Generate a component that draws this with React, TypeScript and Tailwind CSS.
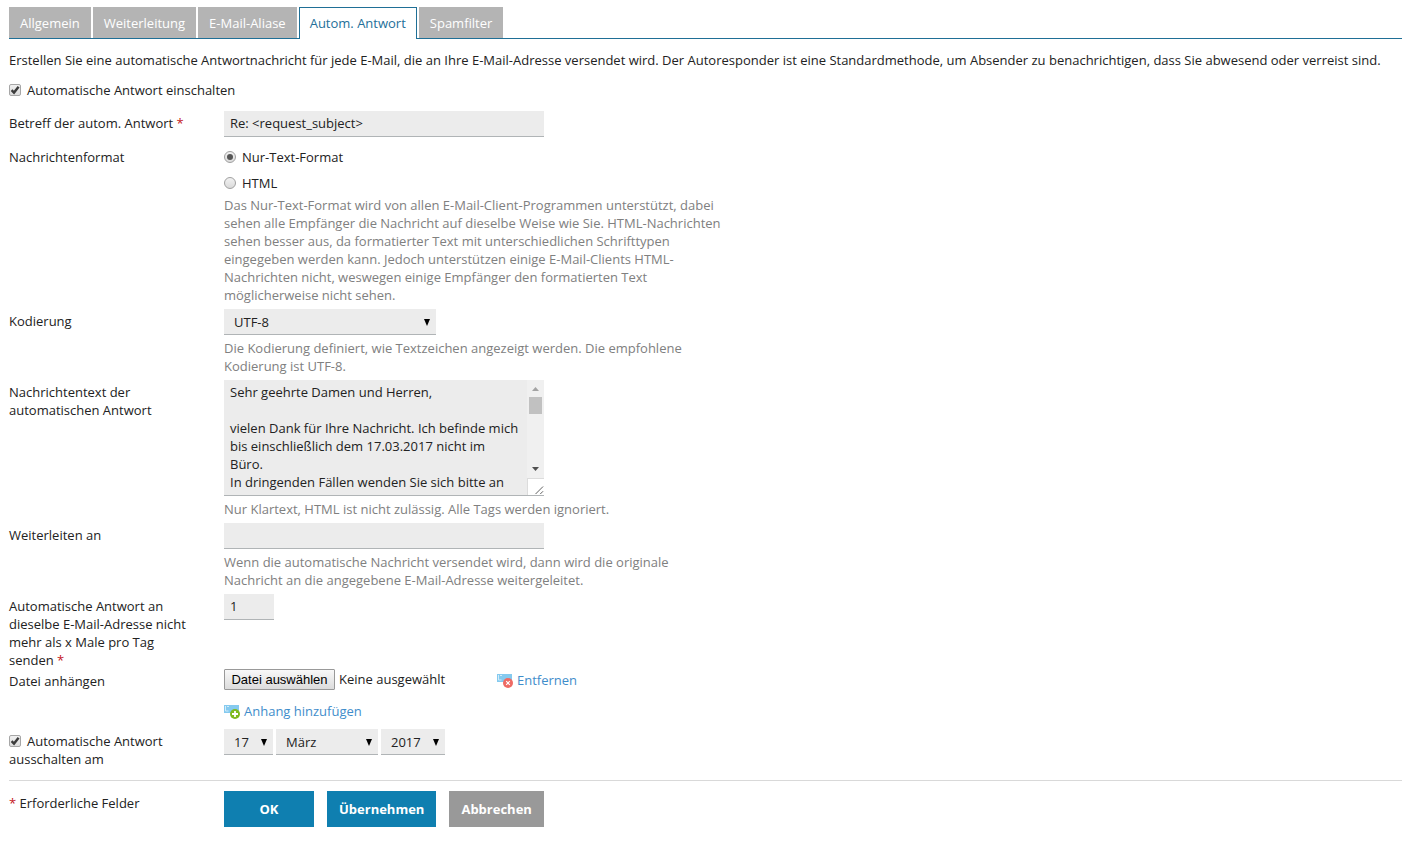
import { useRef, useState, type ReactNode } from "react";

const TABS = ["Allgemein", "Weiterleitung", "E-Mail-Aliase", "Autom. Antwort", "Spamfilter"];

const MESSAGE = `Sehr geehrte Damen und Herren,

vielen Dank für Ihre Nachricht. Ich befinde mich bis einschließlich dem 17.03.2017 nicht im Büro.
In dringenden Fällen wenden Sie sich bitte an`;

const FIELD = "block h-[26px] border-b border-[#b0b4b6] bg-[#ececec] px-1.5 pb-px outline-none focus:border-[#0f7fb0]";

function Required() {
  return <span className="text-[#c4161c]">*</span>;
}

function Row({ label, htmlFor, className = "mb-[5px]", children }: { label: ReactNode; htmlFor?: string; className?: string; children: ReactNode }) {
  return (
    <div className={`grid grid-cols-[215px_1fr] ${className}`}>
      <div className="w-[185px] pt-[3px]">{htmlFor ? <label htmlFor={htmlFor}>{label}</label> : label}</div>
      <div>{children}</div>
    </div>
  );
}

function Hint({ children }: { children: ReactNode }) {
  return <p className="mt-1 max-w-[500px] text-[#808080]">{children}</p>;
}

function Tick({ id, checked, onChange }: { id: string; checked: boolean; onChange: (v: boolean) => void }) {
  return (
    <span className="relative mr-1.5 inline-block size-3 align-[-1px]">
      <input
        id={id}
        type="checkbox"
        checked={checked}
        onChange={(e) => onChange(e.target.checked)}
        className="block size-3 appearance-none rounded-[2px] border border-[#a6a6a6] bg-linear-to-b from-[#f0f0f0] to-[#dcdcdc]"
      />
      {checked && (
        <svg viewBox="0 0 12 12" className="pointer-events-none absolute inset-0 size-3" aria-hidden="true">
          <path d="M2.600 6.200 5 8.600 9.600 2.800" fill="none" stroke="#3c3c3c" strokeWidth="2.400" />
        </svg>
      )}
    </span>
  );
}

function Radio({ id, checked, onChange, children }: { id: string; checked: boolean; onChange: () => void; children: ReactNode }) {
  return (
    <div className="flex items-center gap-1.5">
      <span className="relative block size-3">
        <input
          id={id}
          type="radio"
          name="format"
          checked={checked}
          onChange={onChange}
          className="block size-3 appearance-none rounded-full border border-[#a0a0a0] bg-linear-to-b from-[#f2f2f2] to-[#dadada]"
        />
        {checked && <span className="pointer-events-none absolute inset-[3px] rounded-full bg-[#555]" />}
      </span>
      <label htmlFor={id}>{children}</label>
    </div>
  );
}

function Select({ id, label, options, className }: { id: string; label?: string; options: string[]; className: string }) {
  return (
    <span className={`relative block ${className}`}>
      <select
        id={id}
        aria-label={label}
        className="block h-[26px] w-full appearance-none border-b border-[#b0b4b6] bg-[#ececec] pl-2.5 outline-none focus:border-[#0f7fb0]"
      >
        {options.map((o) => (
          <option key={o}>{o}</option>
        ))}
      </select>
      <svg viewBox="0 0 6 7" className="pointer-events-none absolute top-2.5 right-1.5 h-[7px] w-1.5" aria-hidden="true">
        <path d="M0 0h6L3 7z" fill="#000" />
      </svg>
    </span>
  );
}

function AttachIcon({ kind }: { kind: "remove" | "add" }) {
  return (
    <svg viewBox="0 0 16 16" className="size-4" aria-hidden="true">
      <path d="M0 2h15v8H0z" fill="#85caef" />
      <path d="M1.500 3v5h3M3 3.500h2" stroke="#d3edfa" fill="none" />
      {kind === "remove" ? (
        <>
          <circle cx="11" cy="11" r="5" fill="#ee6a64" />
          <path d="m9.200 9.200 3.600 3.600m0-3.600-3.600 3.600" stroke="#fff" strokeWidth="1.200" />
        </>
      ) : (
        <>
          <circle cx="11" cy="11" r="5" fill="#7fb91e" />
          <path d="M11 8v6M8 11h6" stroke="#fff" strokeWidth="1.800" />
        </>
      )}
    </svg>
  );
}

function ScrollTrack() {
  return (
    <div className="pointer-events-none absolute inset-y-0 right-0 flex w-[17px] flex-col bg-[#f0f0f0]" aria-hidden="true">
      <svg viewBox="0 0 17 17" className="size-[17px]">
        <path d="M5 11h7L8.500 7z" fill="#a3a3a3" />
      </svg>
      <div className="mx-0.5 h-[17px] bg-[#c1c1c1]" />
      <div className="grow" />
      <svg viewBox="0 0 17 17" className="size-[17px]">
        <path d="M5 6h7L8.500 10z" fill="#505050" />
      </svg>
      <svg viewBox="0 0 17 17" className="size-[17px] border-t border-l border-[#dcdcdc] bg-white">
        <path d="M8 16l8-8M13 16l3-3" stroke="#555" fill="none" />
      </svg>
    </div>
  );
}

export default function App() {
  const [tab, setTab] = useState("Autom. Antwort");
  const [enabled, setEnabled] = useState(true);
  const [autoOff, setAutoOff] = useState(true);
  const [format, setFormat] = useState("text");
  const [fileName, setFileName] = useState("");
  const fileRef = useRef<HTMLInputElement>(null);

  return (
    <main className="min-h-screen bg-white pt-[7px] pb-3.5 pl-[9px] font-['Open_Sans',sans-serif] text-[13px] leading-[18px] text-[#222]">
      <nav className="flex gap-0.5 border-b border-[#1f6f96]" role="tablist">
        {TABS.map((t) => (
          <button
            key={t}
            type="button"
            role="tab"
            aria-selected={t === tab}
            onClick={() => setTab(t)}
            className={
              t === tab
                ? "-mb-px h-8 border border-b-0 border-[#1f6f96] bg-white px-2.5 pb-0.5 text-[#24709a]"
                : "h-[31px] bg-[#b4b4b4] px-[11px] text-white"
            }
          >
            {t}
          </button>
        ))}
      </nav>

      <p className="mt-3">
        Erstellen Sie eine automatische Antwortnachricht für jede E-Mail, die an Ihre E-Mail-Adresse versendet wird. Der Autoresponder ist eine
        Standardmethode, um Absender zu benachrichtigen, dass Sie abwesend oder verreist sind.
      </p>

      <form onSubmit={(e) => e.preventDefault()}>
        <div className="mt-3 mb-3">
          <Tick id="enabled" checked={enabled} onChange={setEnabled} />
          <label htmlFor="enabled">Automatische Antwort einschalten</label>
        </div>

        <Row htmlFor="subject" className="mb-2" label={<>Betreff der autom. Antwort <Required /></>}>
          <input id="subject" type="text" defaultValue="Re: <request_subject>" className={`${FIELD} w-80`} />
        </Row>

        <Row label="Nachrichtenformat">
          <div className="flex flex-col gap-2 pt-[3px]">
            <Radio id="format-text" checked={format === "text"} onChange={() => setFormat("text")}>
              Nur-Text-Format
            </Radio>
            <Radio id="format-html" checked={format === "html"} onChange={() => setFormat("html")}>
              HTML
            </Radio>
          </div>
          <Hint>
            Das Nur-Text-Format wird von allen E-Mail-Client-Programmen unterstützt, dabei sehen alle Empfänger die Nachricht auf dieselbe Weise wie
            Sie. HTML-Nachrichten sehen besser aus, da formatierter Text mit unterschiedlichen Schrifttypen eingegeben werden kann. Jedoch
            unterstützen einige E-Mail-Clients HTML-Nachrichten nicht, weswegen einige Empfänger den formatierten Text möglicherweise nicht sehen.
          </Hint>
        </Row>

        <Row htmlFor="encoding" label="Kodierung">
          <Select id="encoding" options={["UTF-8"]} className="w-[212px]" />
          <Hint>Die Kodierung definiert, wie Textzeichen angezeigt werden. Die empfohlene Kodierung ist UTF-8.</Hint>
        </Row>

        <Row htmlFor="message" label="Nachrichtentext der automatischen Antwort">
          <div className="relative w-80 border-b border-[#b0b4b6]">
            <textarea
              id="message"
              defaultValue={MESSAGE}
              className="block h-[115px] w-full resize-none bg-[#ececec] pt-[3px] pr-[23px] pl-1.5 outline-none [scrollbar-width:none]"
            />
            <ScrollTrack />
          </div>
          <Hint>Nur Klartext, HTML ist nicht zulässig. Alle Tags werden ignoriert.</Hint>
        </Row>

        <Row htmlFor="forward" label="Weiterleiten an">
          <input id="forward" type="text" className={`${FIELD} w-80`} />
          <Hint>
            Wenn die automatische Nachricht versendet wird, dann wird die originale Nachricht an die angegebene E-Mail-Adresse weitergeleitet.
          </Hint>
        </Row>

        <Row
          htmlFor="limit"
          className="mb-0"
          label={<>Automatische Antwort an dieselbe E-Mail-Adresse nicht mehr als x Male pro Tag senden <Required /></>}
        >
          <input id="limit" type="text" defaultValue="1" className={`${FIELD} w-[50px]`} />
        </Row>

        <Row htmlFor="file" label="Datei anhängen" className="mb-[9px]">
          <div className="flex items-center">
            <div className="flex w-[273px] items-center gap-1">
              <input
                ref={fileRef}
                id="file"
                type="file"
                className="hidden"
                onChange={(e) => setFileName(e.target.files?.[0]?.name ?? "")}
              />
              <button
                type="button"
                onClick={() => fileRef.current?.click()}
                className="h-[21px] w-[111px] rounded-[1px] border border-[#999] bg-linear-to-b from-[#f8f8f8] to-[#dcdcdc] font-['Liberation_Sans',sans-serif] text-[13px] leading-[18px] whitespace-nowrap text-black"
              >
                Datei auswählen
              </button>
              <span className="pb-0.5">{fileName || "Keine ausgewählt"}</span>
            </div>
            <a href="#entfernen" className="flex items-center gap-1 text-[#3f8dcb]">
              <AttachIcon kind="remove" />
              Entfernen
            </a>
          </div>
          <div className="mt-3 flex">
            <a href="#anhang" className="flex items-center gap-1 text-[#3f8dcb]">
              <AttachIcon kind="add" />
              Anhang hinzufügen
            </a>
          </div>
        </Row>

        <Row
          className="mb-3"
          label={
            <>
              <Tick id="auto-off" checked={autoOff} onChange={setAutoOff} />
              <label htmlFor="auto-off">Automatische Antwort ausschalten am</label>
            </>
          }
        >
          <div className="flex gap-[3px]">
            <Select id="day" label="Tag" options={["17"]} className="w-[49px]" />
            <Select id="month" label="Monat" options={["März"]} className="w-[102px]" />
            <Select id="year" label="Jahr" options={["2017"]} className="w-16" />
          </div>
        </Row>

        <div className="grid grid-cols-[215px_1fr] border-t border-[#d9d9d9] pt-2.5">
          <p className="pt-[3px]">
            <Required /> Erforderliche Felder
          </p>
          <div className="flex gap-[13px] font-bold text-white">
            <button type="submit" className="h-9 min-w-[90px] bg-[#0f7fb0] px-3">
              OK
            </button>
            <button type="button" className="h-9 min-w-[90px] bg-[#0f7fb0] px-3">
              Übernehmen
            </button>
            <button type="button" className="h-9 min-w-[90px] bg-[#999] px-3">
              Abbrechen
            </button>
          </div>
        </div>
      </form>
    </main>
  );
}
